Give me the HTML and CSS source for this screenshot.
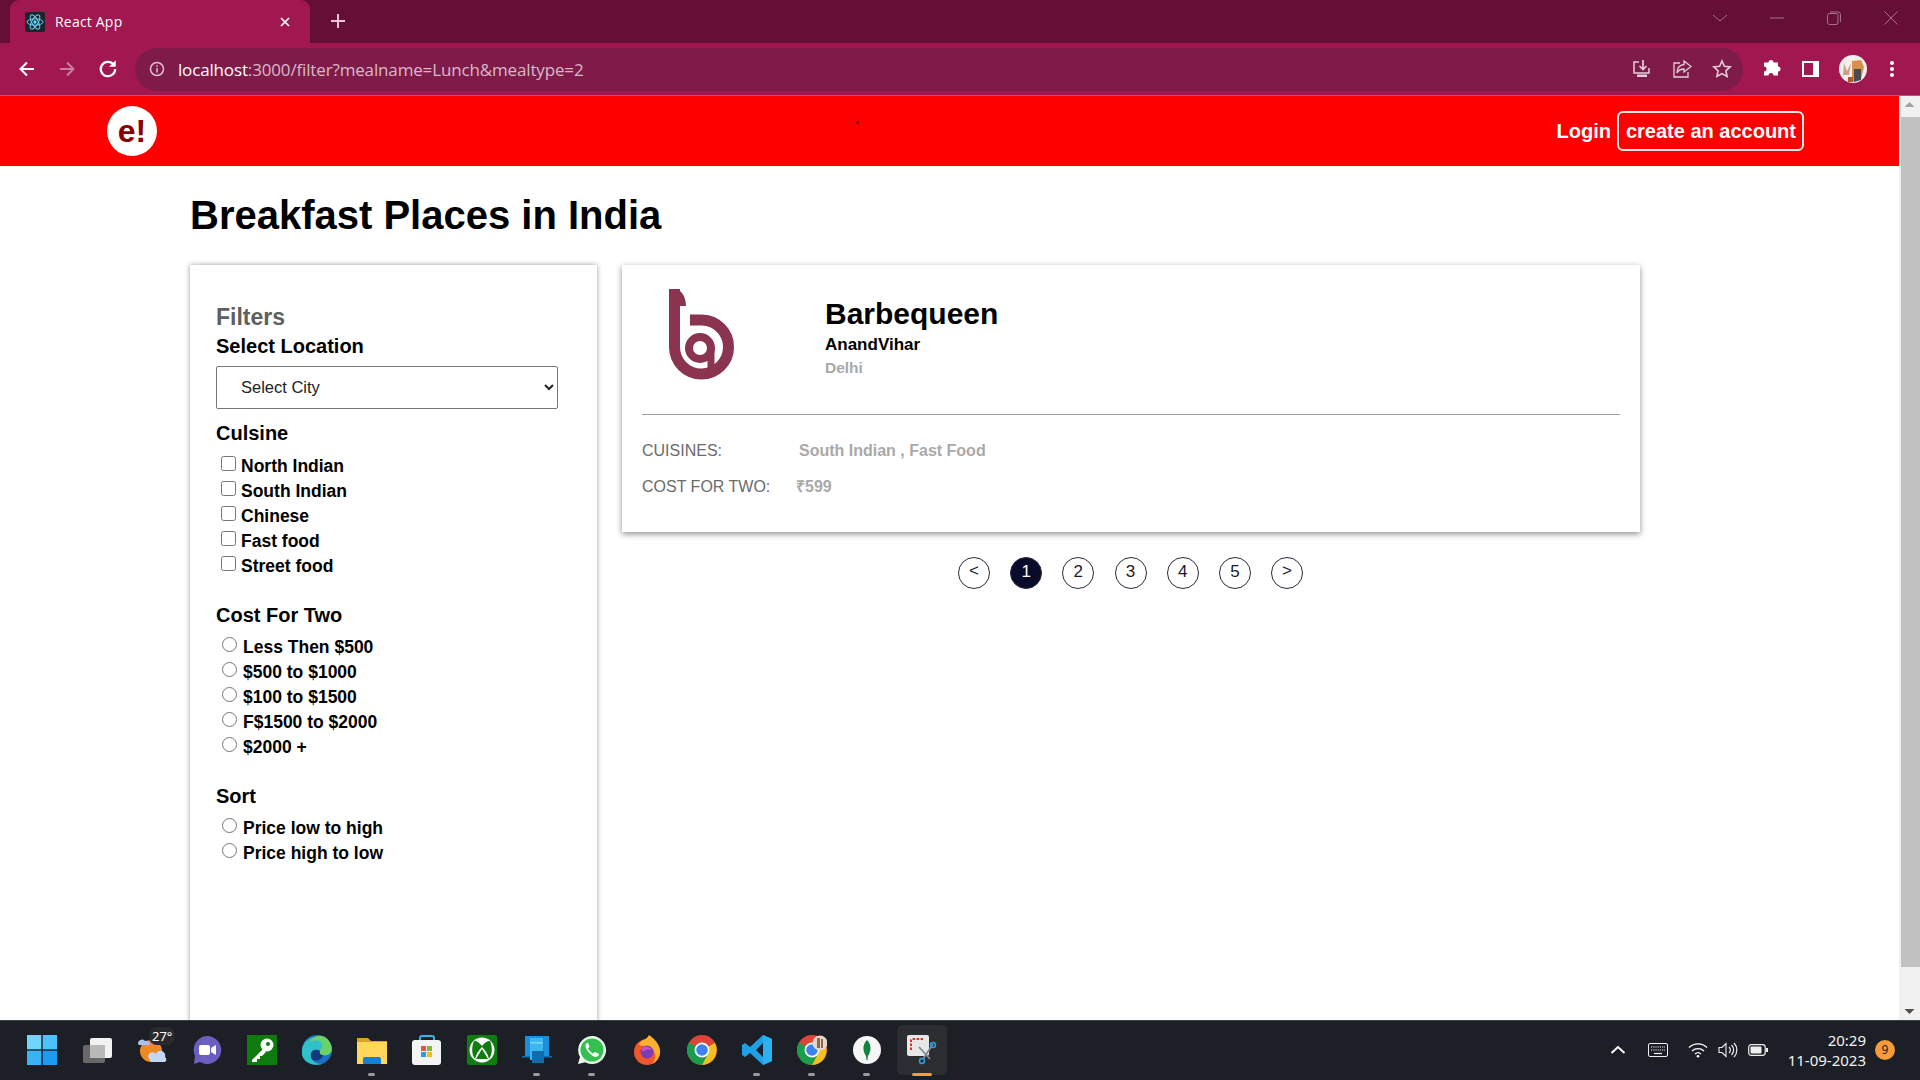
FILE: index.html
```html
<!DOCTYPE html>
<html lang="en">
<head>
<meta charset="UTF-8">
<title>React App</title>
<link rel="stylesheet" href="styles.css">
</head>
<body>
<!-- browser tabs -->
<div class="tabstrip">
  <div class="tab">
    <svg class="favicon" viewBox="0 0 20 20"><rect width="20" height="20" rx="2" fill="#20232a"/><g fill="none" stroke="#61dafb" stroke-width="1"><ellipse cx="10" cy="10" rx="8" ry="3.2"/><ellipse cx="10" cy="10" rx="8" ry="3.2" transform="rotate(60 10 10)"/><ellipse cx="10" cy="10" rx="8" ry="3.2" transform="rotate(120 10 10)"/></g><circle cx="10" cy="10" r="1.7" fill="#61dafb"/></svg>
    <span class="tab-title">React App</span>
    <svg class="tab-close" viewBox="0 0 12 12"><path d="M2 2l8 8M10 2l-8 8" stroke="#fff" stroke-width="1.7"/></svg>
  </div>
  <svg class="new-tab" viewBox="0 0 16 16"><path d="M8 1v14M1 8h14" stroke="#e8c5d5" stroke-width="2"/></svg>
  <div class="win-controls">
    <svg viewBox="0 0 16 16"><path d="M1 5l7 6 7-6" fill="none" stroke="#a8708a" stroke-width="1"/></svg>
    <svg viewBox="0 0 16 16"><path d="M1 8h14" stroke="#a8708a" stroke-width="1"/></svg>
    <svg viewBox="0 0 16 16"><rect x="1.5" y="3.5" width="10.5" height="11" rx="2" fill="none" stroke="#a8708a"/><path d="M4 2h8a2.5 2.5 0 0 1 2.5 2.5V12" fill="none" stroke="#a8708a"/></svg>
    <svg viewBox="0 0 16 16"><path d="M1.500 1.500l13 13M14.500 1.500l-13 13" stroke="#a8708a" stroke-width="1"/></svg>
  </div>
</div>

<!-- address bar -->
<div class="toolbar">
  <svg class="nav-icon" viewBox="0 0 18 18"><path d="M16 9H3M9 2.500L2.500 9 9 15.500" fill="none" stroke="#fff" stroke-width="2"/></svg>
  <svg class="nav-icon" viewBox="0 0 18 18"><path d="M2 9h13M9 2.500L15.500 9 9 15.500" fill="none" stroke="#cd7c9f" stroke-width="2"/></svg>
  <svg class="nav-icon reload" viewBox="0 0 18 18"><path d="M15.500 9a6.500 6.500 0 1 1-1.900-4.600" fill="none" stroke="#fff" stroke-width="2"/><path d="M16 1v6h-6z" fill="#fff"/></svg>
  <div class="urlbar">
    <svg class="url-info" viewBox="0 0 16 16"><circle cx="8" cy="8" r="6.500" fill="none" stroke="#dcc0cd" stroke-width="1.500"/><path d="M8 7v4.500M8 4.200v1.500" stroke="#dcc0cd" stroke-width="1.500"/></svg>
    <span class="url-text"><span class="url-host">localhost</span>:3000/filter?mealname=Lunch&amp;mealtype=2</span>
    <div class="url-actions">
      <svg viewBox="0 0 20 20"><path d="M7 3H2v11h15V9" fill="none" stroke="#e6cdd9" stroke-width="1.500"/><path d="M11 1v9M7.500 7l3.500 3.500L14.500 7" fill="none" stroke="#e6cdd9" stroke-width="1.700"/><rect x="5" y="15.500" width="10" height="2.500" fill="#e6cdd9"/></svg>
      <svg viewBox="0 0 20 20"><path d="M8 4H2v14h14v-5" fill="none" stroke="#e6cdd9" stroke-width="1.300"/><path d="M12 2l7 5.500-7 5.500V10c-3.500 0-5.500 1-7 4 0-5 2.500-8 7-8.500z" fill="none" stroke="#e6cdd9" stroke-width="1.300"/></svg>
      <svg viewBox="0 0 20 20"><path d="M10 2l2.400 5.300 5.800.6-4.300 3.900 1.200 5.700L10 14.600l-5.100 2.900 1.200-5.700L1.800 7.900l5.800-.6z" fill="none" stroke="#e6cdd9" stroke-width="1.600"/></svg>
    </div>
  </div>
  <div class="tool-actions">
    <svg viewBox="0 0 20 20"><path d="M7.500 4.500a2.500 2.500 0 0 1 5 0h4.500v4a2.500 2.500 0 0 1 0 5v4h-4.500a2.500 2.500 0 0 0-5 0H3v-4a2.500 2.500 0 0 0 0-5v-4z" fill="#fff" transform="translate(0 -1)"/></svg>
    <svg viewBox="0 0 20 20"><rect x="2" y="2" width="17" height="16" fill="#fff"/><rect x="4" y="4" width="9" height="12" fill="#a11750"/></svg>
    <svg class="avatar" viewBox="0 0 28 28"><circle cx="14" cy="14" r="14" fill="#f2eeea"/><path d="M13 6l9-1 3 7-3 12-9 3z" fill="#d9904f"/><path d="M15 14h7v11l-7 2z" fill="#4a4a50"/><path d="M5 8l3 8 4-8-2 12-6 0z" fill="#c7a184"/><path d="M9 22h5v5H9z" fill="#b5532c"/></svg>
    <svg class="dots" viewBox="0 0 4 18"><circle cx="2" cy="3" r="2" fill="#fff"/><circle cx="2" cy="9" r="2" fill="#fff"/><circle cx="2" cy="15" r="2" fill="#fff"/></svg>
  </div>
</div>

<!-- the page itself -->
<div class="viewport">
  <div class="page">
    <header class="site-header">
      <div class="logo">e!</div>
      <span class="cursor-dot"></span>
      <nav class="site-nav">
        <a class="login">Login</a>
        <a class="signup">create an account</a>
      </nav>
    </header>

    <h1 class="heading">Breakfast Places in India</h1>

    <div class="content">
      <aside class="filters">
        <div class="filters-title">Filters</div>
        <div class="filter-label">Select Location</div>
        <select class="city-select"><option>Select City</option></select>

        <div class="filter-label cuisine-label">Culsine</div>
        <label class="check-row"><input type="checkbox"><span>North Indian</span></label>
        <label class="check-row"><input type="checkbox"><span>South Indian</span></label>
        <label class="check-row"><input type="checkbox"><span>Chinese</span></label>
        <label class="check-row"><input type="checkbox"><span>Fast food</span></label>
        <label class="check-row"><input type="checkbox"><span>Street food</span></label>

        <div class="filter-label group-label">Cost For Two</div>
        <label class="radio-row"><input type="radio" name="cost"><span>Less Then $500</span></label>
        <label class="radio-row"><input type="radio" name="cost"><span>$500 to $1000</span></label>
        <label class="radio-row"><input type="radio" name="cost"><span>$100 to $1500</span></label>
        <label class="radio-row"><input type="radio" name="cost"><span>F$1500 to $2000</span></label>
        <label class="radio-row"><input type="radio" name="cost"><span>$2000 +</span></label>

        <div class="filter-label group-label">Sort</div>
        <label class="radio-row"><input type="radio" name="sort"><span>Price low to high</span></label>
        <label class="radio-row"><input type="radio" name="sort"><span>Price high to low</span></label>
      </aside>

      <section class="results">
        <div class="card">
          <div class="card-top">
            <svg class="card-logo" viewBox="0 0 80 100">
              <path d="M14.500 8V66A27 27 0 1 0 42 39H30" fill="none" stroke="#8b3450" stroke-width="11"/>
              <path d="M9 8h5c7 0 12 7 12 17h-6c0-5-2-8-6-8z" fill="#8b3450"/>
              <circle cx="40" cy="67" r="11" fill="none" stroke="#8b3450" stroke-width="8"/>
              <path d="M51 67v23" stroke="#8b3450" stroke-width="7"/>
            </svg>
            <div class="card-info">
              <div class="card-name">Barbequeen</div>
              <div class="card-area">AnandVihar</div>
              <div class="card-city">Delhi</div>
            </div>
          </div>
          <hr class="card-rule">
          <div class="card-line"><span class="line-key cuisines-key">CUISINES:</span><span class="line-value">South Indian , Fast Food</span></div>
          <div class="card-line"><span class="line-key cost-key">COST FOR TWO:</span><span class="line-value">₹599</span></div>
        </div>

        <div class="pagination">
          <span class="page-btn arrow">&lt;</span>
          <span class="page-btn current">1</span>
          <span class="page-btn">2</span>
          <span class="page-btn">3</span>
          <span class="page-btn">4</span>
          <span class="page-btn">5</span>
          <span class="page-btn arrow">&gt;</span>
        </div>
      </section>
    </div>
  </div>

  <div class="scrollbar">
    <svg class="scroll-arrow" viewBox="0 0 20 17"><path d="M10 6l5 5H5z" fill="#a3a3a3"/></svg>
    <div class="scroll-thumb"></div>
    <svg class="scroll-arrow" viewBox="0 0 20 17"><path d="M10 11l5-5H5z" fill="#505050"/></svg>
  </div>
</div>

<!-- windows taskbar -->
<div class="taskbar">
  <div class="task-icons">
    <div class="task-icon"><svg viewBox="0 0 30 30"><g fill="#35b4f4"><rect width="14.300" height="14.300" fill="#6fd6fb"/><rect x="15.700" width="14.300" height="14.300" fill="#4cc3f8"/><rect y="15.700" width="14.300" height="14.300" fill="#38b3f6"/><rect x="15.700" y="15.700" width="14.300" height="14.300" fill="#1c9bf0"/></g></svg></div>
    <div class="task-icon"><svg viewBox="0 0 30 30"><rect x="8" y="3" width="22" height="20" rx="2" fill="#f2f2f2"/><rect x="1" y="10" width="22" height="18" rx="2" fill="#6f6f6f" opacity=".92"/><rect x="8" y="10" width="15" height="13" fill="#b9b9b9"/></svg></div>
    <div class="task-icon"><svg viewBox="0 0 30 30"><circle cx="14" cy="16" r="11" fill="#ee8a22"/><path d="M1 9a4 4 0 0 1 7-3 4 4 0 0 1 5 4H2z" fill="#a7c4e8"/><path d="M12 24a4 4 0 0 1 7-5 4 4 0 0 1 9 3 3 3 0 0 1 0 5H14z" fill="#c2d8f0"/></svg><span class="temp">27°</span></div>
    <div class="task-icon"><svg viewBox="0 0 30 30"><path d="M15 1a14 14 0 1 1-7 26l-6 2 1-8A14 14 0 0 1 15 1z" fill="#6a5fc1"/><rect x="7" y="10" width="11" height="10" rx="2" fill="#fff"/><path d="M19 13l5-3v10l-5-3z" fill="#fff"/></svg></div>
    <div class="task-icon"><svg viewBox="0 0 30 30"><rect width="30" height="30" fill="#0f7b0f"/><circle cx="20" cy="10" r="6.500" fill="#fff"/><circle cx="21" cy="9" r="2" fill="#0f7b0f"/><path d="M16 14L5 25v2h5v-3h3v-3h2l4-4z" fill="#fff"/></svg></div>
    <div class="task-icon"><svg viewBox="0 0 30 30"><circle cx="15" cy="15" r="15" fill="#1a6fc4"/><path d="M2 9C6 1 24-3 29 10c3 8-3 11-8 10-3 0-4-2-3-4-5-3-10 0-9 6 1 4 5 7 11 7C10 32-2 26 0 15c0-2 1-4 2-6z" fill="#2fc0c9"/><path d="M29 10c3 8-3 11-8 10-3 0-4-2-3-4 1-3 4-5 2-8-3-4-10-3-13 0C12-2 25-2 29 10z" fill="#6cd265"/><path d="M9 22c-1-6 4-9 9-6-1 2 0 4 3 4-1 6-11 8-12 2z" fill="#0f3a80"/></svg></div>
    <div class="task-icon"><svg viewBox="0 0 30 30"><path d="M0 3h11l3 3h16v22H0z" fill="#d9a520"/><rect y="7" width="30" height="22" fill="#ffd75a"/><path d="M6 29v-5a2 2 0 0 1 2-2h14a2 2 0 0 1 2 2v5z" fill="#1b7fd1"/></svg><i class="open-dot"></i></div>
    <div class="task-icon"><svg viewBox="0 0 30 30"><path d="M8 7V3a2 2 0 0 1 2-2h10a2 2 0 0 1 2 2v4" fill="none" stroke="#36b4e6" stroke-width="2"/><rect y="5" width="29" height="25" rx="3" fill="#f4f4f4"/><rect x="9" y="11" width="5" height="5" fill="#e8533b"/><rect x="15" y="11" width="5" height="5" fill="#86b92d"/><rect x="9" y="17" width="5" height="5" fill="#2a9de5"/><rect x="15" y="17" width="5" height="5" fill="#f7b71e"/></svg></div>
    <div class="task-icon"><svg viewBox="0 0 30 30"><rect width="30" height="30" rx="2" fill="#107c10"/><circle cx="15" cy="15" r="12.500" fill="#fff"/><path d="M15 11C12 7 9 5.500 7 6 4 13 5 20 8 24c1-5 4-9 7-12 3 3 6 7 7 12 3-4 4-11 1-18-2-.5-5 1-8 5z" fill="#107c10"/><path d="M15 14l-6 10h12z" fill="#107c10"/></svg></div>
    <div class="task-icon"><svg viewBox="0 0 30 30"><path d="M3 1h24v20H3z" fill="#1c8fd8"/><path d="M0 21h30v1.500H0z" fill="#0f6cb0"/><rect x="8" y="3" width="13" height="22" fill="#3fb6ee"/><rect x="8" y="7" width="13" height="1.500" fill="#7ed4f6"/><rect x="10" y="16" width="12" height="12" fill="#0f6cb0"/></svg><i class="open-dot"></i></div>
    <div class="task-icon"><svg viewBox="0 0 30 30"><path d="M15 1a14 14 0 1 1-6.800 26.200L1 29l2-7A14 14 0 0 1 15 1z" fill="#e9f9ed"/><circle cx="15" cy="15" r="11.500" fill="#34c050"/><path d="M10 8c-2 1-2 4 0 7s5 6 8 7c3 0 4-2 4-3l-4-2-2 1.500c-2-1-4-3-5-5l1.500-2L11 8z" fill="#fff"/></svg><i class="open-dot"></i></div>
    <div class="task-icon"><svg viewBox="0 0 30 30"><circle cx="15" cy="17" r="13" fill="#f0562a"/><path d="M7 9c3-5 8-4 10-9 6 4 10 9 11 15 1 5-3 12-8 14 6-7 3-15-3-17-4-1-8 0-10-3z" fill="#ffb02b"/><circle cx="15" cy="17" r="6.500" fill="#7b3bb5"/><path d="M9 14c3-4 9-3 11 1-3-1-7-1-9 2z" fill="#c452c9"/></svg></div>
    <div class="task-icon"><svg viewBox="0 0 30 30"><circle cx="15" cy="15" r="15" fill="#de4437"/><path d="M15 15L28 8a15 15 0 0 1-13 22z" fill="#f4c01e"/><path d="M15 30A15 15 0 0 1 2 7.500L15 15l6.500 3z" fill="#1b9e4b"/><circle cx="15" cy="15" r="7.500" fill="#fff"/><circle cx="15" cy="15" r="5.800" fill="#3e82f1"/></svg></div>
    <div class="task-icon"><svg viewBox="0 0 30 30"><path d="M21 0l9 4v22l-9 4L8 18l-5 4-3-2v-10l3-2 5 4zM21 8l-7 7 7 7z" fill="#1f9fe5"/><path d="M21 0l9 4v22l-9 4z" fill="#2bb0f1"/></svg><i class="open-dot"></i></div>
    <div class="task-icon"><svg viewBox="0 0 30 30"><circle cx="15" cy="15" r="15" fill="#de4437"/><path d="M15 15L28 8a15 15 0 0 1-13 22z" fill="#f4c01e"/><path d="M15 30A15 15 0 0 1 2 7.500L15 15l6.500 3z" fill="#1b9e4b"/><circle cx="15" cy="15" r="7.500" fill="#fff"/><circle cx="15" cy="15" r="5.800" fill="#3e82f1"/><circle cx="23" cy="8" r="7.500" fill="#e4d7c6"/><path d="M20 3h3v10h-3zM24 4h2v9h-2z" fill="#8a6a50"/></svg><i class="open-dot"></i></div>
    <div class="task-icon"><svg viewBox="0 0 30 30"><circle cx="15" cy="15" r="14" fill="#f6f6f6"/><path d="M15 5c4 4 5 10 1 16l-.5 4h-1l-.5-4c-4-6-3-12 1-16z" fill="#13843f"/></svg><i class="open-dot"></i></div>
    <div class="task-icon active"><svg viewBox="0 0 30 30"><rect width="22" height="21" rx="2" fill="#e7e7e7"/><path d="M4 15V5a1 1 0 0 1 1-1h11" fill="none" stroke="#c8392b" stroke-width="2" stroke-dasharray="2.500 1.500"/><path d="M12 12l11 12M26 9L16 24" stroke="#7f8a94" stroke-width="1.800"/><circle cx="26" cy="10" r="2.500" fill="none" stroke="#2f9fdc" stroke-width="1.500"/><circle cx="15" cy="26" r="2.500" fill="none" stroke="#2f9fdc" stroke-width="1.500"/></svg><i class="open-bar"></i></div>
  </div>

  <div class="tray">
    <svg class="tray-chevron" viewBox="0 0 16 10"><path d="M1.500 8L8 2l6.500 6" fill="none" stroke="#fff" stroke-width="2"/></svg>
    <svg class="tray-keyboard" viewBox="0 0 20 14"><rect x=".5" y=".5" width="19" height="13" rx="1.500" fill="none" stroke="#eee"/><path d="M3 4h14M3 7h14" stroke="#eee" stroke-dasharray="1.200 1"/><path d="M6 10.500h8" stroke="#eee" stroke-width="1.200"/></svg>
    <svg class="tray-wifi" viewBox="0 0 20 16"><path d="M1 5.500a13 13 0 0 1 18 0M4 9a9 9 0 0 1 12 0M7 12a4.500 4.500 0 0 1 6 0" fill="none" stroke="#fff" stroke-width="1.300"/><circle cx="10" cy="14.300" r="1.300" fill="#fff"/></svg>
    <svg class="tray-volume" viewBox="0 0 20 16"><path d="M1 5.500h3l4-4v13l-4-4H1z" fill="none" stroke="#eee" stroke-width="1.100"/><path d="M11 5a4 4 0 0 1 0 6M13.500 3a7 7 0 0 1 0 10M16 1a10 10 0 0 1 0 14" fill="none" stroke="#eee" stroke-width="1.200"/></svg>
    <svg class="tray-battery" viewBox="0 0 20 12"><rect x=".7" y=".7" width="16.500" height="10.600" rx="2.500" fill="none" stroke="#eee" stroke-width="1.200"/><rect x="2.500" y="2.500" width="11" height="7" rx="1" fill="#eee"/><rect x="18" y="4" width="2" height="4" fill="#eee"/></svg>
    <div class="clock"><div>20:29</div><div>11-09-2023</div></div>
    <span class="notify">9</span>
  </div>
</div>
</body>
</html>
```

FILE: styles.css
```css
* {
  box-sizing: border-box;
}
html, body {
  margin: 0;
  height: 100%;
}
body {
  overflow: hidden;
  display: flex;
  flex-direction: column;
  font-family: "Liberation Sans", Arial, sans-serif;
  background: #fff;
}

/* browser tabs */
.tabstrip {
  height: 43px;
  flex: none;
  display: flex;
  align-items: flex-start;
  background: #650e36;
  padding-left: 10px;
}
.tab {
  width: 300px;
  height: 43px;
  display: flex;
  align-items: center;
  padding: 0 15px;
  background: #a11750;
  border-radius: 9px 9px 0 0;
  color: #fff;
}
.favicon {
  width: 20px;
  height: 20px;
}
.tab-title {
  margin-left: 10px;
  font: 14px "Open Sans", sans-serif;
  letter-spacing: 0.2px;
  flex: 1;
}
.tab-close {
  width: 12px;
  height: 12px;
  margin-right: 4px;
}
.new-tab {
  width: 16px;
  height: 16px;
  margin: 13px 0 0 20px;
}
.win-controls {
  margin-left: auto;
  display: flex;
  padding: 10px 21px 0 0;
  gap: 41px;
}
.win-controls svg {
  width: 16px;
  height: 16px;
}

/* address bar */
.toolbar {
  height: 53px;
  flex: none;
  display: flex;
  align-items: center;
  background: #a11750;
  border-bottom: 1px solid #c0507e;
  padding: 0 26px 0 18px;
}
.nav-icon {
  width: 18px;
  height: 18px;
  margin-right: 22px;
}
.nav-icon.reload {
  width: 20px;
  height: 20px;
  margin-right: 20px;
}
.urlbar {
  width: 1610px;
  height: 43px;
  margin-left: -3px;
  display: flex;
  align-items: center;
  background: #7f1b48;
  border-radius: 22px;
  padding: 0 11px 0 14px;
}
.url-info {
  width: 16px;
  height: 16px;
}
.url-text {
  margin-left: 13px;
  font: 17px "Open Sans", sans-serif;
  letter-spacing: -0.15px;
  color: #d8b9c8;
}
.url-host {
  color: #fff;
}
.url-actions {
  margin-left: auto;
  display: flex;
  gap: 20px;
}
.url-actions svg {
  width: 20px;
  height: 20px;
}
.tool-actions {
  flex: 1;
  display: flex;
  align-items: center;
  gap: 19px;
  padding-left: 18px;
}
.tool-actions svg {
  width: 20px;
  height: 20px;
}
.tool-actions .avatar {
  width: 28px;
  height: 28px;
}
.tool-actions .dots {
  width: 4px;
  height: 18px;
  margin-left: 4px;
}

/* page area */
.viewport {
  flex: 1;
  min-height: 0;
  display: flex;
}
.page {
  flex: 1;
  min-width: 0;
  overflow: hidden;
}
.site-header {
  position: relative;
  height: 70px;
  display: flex;
  align-items: center;
  justify-content: space-between;
  background: #f00;
  padding: 0 95px 0 107px;
}
.logo {
  width: 50px;
  height: 50px;
  border-radius: 50%;
  background: #fff;
  color: #8b0000;
  font-size: 32px;
  font-weight: bold;
  line-height: 50px;
  text-align: center;
}
.cursor-dot {
  position: absolute;
  left: 856px;
  top: 25px;
  width: 3px;
  height: 3px;
  border-radius: 50%;
  background: #600;
}
.site-nav {
  display: flex;
  align-items: center;
  gap: 6px;
  color: #fff;
  font-size: 20px;
  font-weight: bold;
}
.signup {
  height: 40px;
  line-height: 36px;
  padding: 0 6px 0 7px;
  border: 2px solid #ffe6e6;
  border-radius: 6px;
}
.heading {
  margin: 0;
  padding: 26px 0 0 190px;
  height: 99px;
  font-size: 40px;
  line-height: 46px;
  color: #000;
}
.content {
  display: flex;
  gap: 25px;
  padding-left: 190px;
}

/* left filter panel */
.filters {
  width: 407px;
  height: 800px;
  flex: none;
  padding: 37px 0 0 26px;
  background: #fff;
  box-shadow: 0 0 5px rgba(0, 0, 0, 0.4);
}
.filters-title {
  font-size: 23px;
  font-weight: bold;
  line-height: 31px;
  color: #5f5f5f;
}
.filter-label {
  font-size: 20px;
  font-weight: bold;
  line-height: 26px;
  color: #000;
}
.city-select {
  display: block;
  width: 342px;
  height: 43px;
  margin-top: 7px;
  padding: 0 0 1px 20px;
  font: 16.500px "Liberation Sans", Arial, sans-serif;
  color: #222;
  background: #fff;
  border: 1px solid #767676;
  border-radius: 2px;
}
.cuisine-label {
  margin: 11px 0 7px;
}
.group-label {
  margin: 24px 0 6px;
}
.check-row, .radio-row {
  display: flex;
  height: 25px;
  font-size: 17.500px;
  font-weight: bold;
  line-height: 27px;
  color: #000;
}
.check-row input, .radio-row input {
  width: 15px;
  height: 15px;
  margin: 3px 5px 0 5px;
  flex: none;
}
.radio-row input {
  margin: 3px 6px 0 6px;
}

/* result card */
.results {
  width: 1018px;
}
.card {
  height: 267px;
  padding: 0 20px;
  background: #fff;
  box-shadow: 0 2px 6px rgba(0, 0, 0, 0.45);
}
.card-top {
  height: 149px;
  display: flex;
}
.card-logo {
  width: 80px;
  height: 100px;
  margin: 16px 0 0 18px;
  flex: none;
}
.card-info {
  margin-left: 85px;
  padding-top: 31px;
}
.card-name {
  font-size: 30px;
  font-weight: bold;
  line-height: 36px;
  color: #000;
}
.card-area {
  font-size: 17px;
  font-weight: bold;
  line-height: 24px;
  margin-top: 1px;
  color: #000;
}
.card-city {
  font-size: 15.500px;
  font-weight: bold;
  line-height: 24px;
  margin-top: -1px;
  color: #a9a9a9;
}
.card-rule {
  height: 1px;
  margin: 0;
  border: none;
  background: #a0a0a0;
}
.card-line {
  display: flex;
  height: 36px;
  font-size: 16px;
  line-height: 36px;
  color: #6b6b6b;
}
.card-rule + .card-line {
  margin-top: 18px;
}
.cuisines-key {
  width: 157px;
}
.cost-key {
  width: 154px;
}
.line-value {
  font-weight: bold;
  color: #a9a9a9;
}

/* pagination */
.pagination {
  display: flex;
  justify-content: center;
  gap: 20.200px;
  margin-top: 25px;
  padding-right: 1px;
}
.page-btn {
  width: 32px;
  height: 32px;
  border: 1px solid #2c2c3a;
  border-radius: 50%;
  color: #1a1a2e;
  font-size: 17px;
  line-height: 28px;
  text-align: center;
}
.page-btn.current {
  background: #0a0a2a;
  color: #fff;
}
.page-btn.arrow {
  line-height: 25px;
}

/* scrollbar */
.scrollbar {
  width: 21px;
  flex: none;
  display: flex;
  flex-direction: column;
  background: #f1f1f1;
}
.scroll-arrow {
  width: 21px;
  height: 17px;
  flex: none;
}
.scroll-thumb {
  flex: 1;
  margin: 4px 0 36px 2px;
  background: #c1c1c1;
}

/* taskbar */
.taskbar {
  height: 60px;
  flex: none;
  display: flex;
  align-items: center;
  justify-content: space-between;
  background: #1c2026;
  border-top: 1px solid #3a3d42;
  padding: 0 25px 2px 14px;
}
.task-icons {
  display: flex;
}
.task-icon {
  position: relative;
  width: 55px;
  height: 50px;
  display: flex;
  align-items: center;
  justify-content: center;
}
.task-icon svg {
  width: 30px;
  height: 30px;
}
.task-icon.active {
  background: #2c2d31;
  border-radius: 5px;
  width: 50px;
  margin-left: 3px;
}
.temp {
  position: absolute;
  top: 2px;
  left: 25px;
  padding: 0 3px;
  border-radius: 8px;
  background: #2a2a2c;
  color: #fff;
  font: 13px "Noto Sans", sans-serif;
}
.open-dot {
  position: absolute;
  left: 24px;
  bottom: -1px;
  width: 7px;
  height: 3px;
  border-radius: 2px;
  background: #9a9a9a;
}
.open-bar {
  position: absolute;
  left: 15px;
  bottom: -1px;
  width: 20px;
  height: 3px;
  border-radius: 2px;
  background: #f59b3c;
}
.tray {
  display: flex;
  align-items: center;
  color: #fff;
}
.tray svg {
  flex: none;
}
.tray-chevron {
  width: 16px;
  height: 10px;
  margin-right: 22px;
}
.tray-keyboard {
  width: 20px;
  height: 14px;
  margin-right: 20px;
}
.tray-wifi {
  width: 20px;
  height: 16px;
  margin-right: 10px;
}
.tray-volume {
  width: 20px;
  height: 16px;
  margin-right: 10px;
}
.tray-battery {
  width: 20px;
  height: 12px;
}
.clock {
  width: 98px;
  text-align: right;
  font: 15px/20px "Noto Sans", sans-serif;
  color: #f2f2f2;
}
.notify {
  width: 20px;
  height: 20px;
  margin-left: 9px;
  border-radius: 50%;
  background: #f59b3c;
  color: #222;
  font: 12px/20px "Noto Sans", sans-serif;
  text-align: center;
}
```
